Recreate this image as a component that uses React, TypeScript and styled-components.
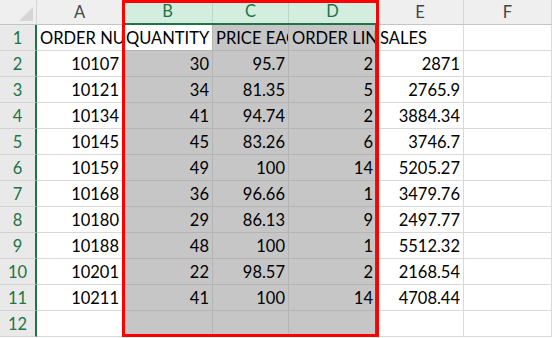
import React from 'react';
import styled, { createGlobalStyle } from 'styled-components';

const GlobalStyle = createGlobalStyle`
  html, body { margin: 0; padding: 0; background: #fff; overflow: hidden; }
  body { font-family: Lato, 'Liberation Sans', Arial, sans-serif; }
`;

const COLUMNS = ['A', 'B', 'C', 'D', 'E', 'F'];
const SELECTED = ['B', 'C', 'D'];

const headings = ['ORDER NUMBER', 'QUANTITY', 'PRICE EACH', 'ORDER LINE NUMBER', 'SALES'];

const data: string[][] = [
  ['10107', '30', '95.7', '2', '2871'],
  ['10121', '34', '81.35', '5', '2765.9'],
  ['10134', '41', '94.74', '2', '3884.34'],
  ['10145', '45', '83.26', '6', '3746.7'],
  ['10159', '49', '100', '14', '5205.27'],
  ['10168', '36', '96.66', '1', '3479.76'],
  ['10180', '29', '86.13', '9', '2497.77'],
  ['10188', '48', '100', '1', '5512.32'],
  ['10201', '22', '98.57', '2', '2168.54'],
  ['10211', '41', '100', '14', '4708.44'],
  ['', '', '', '', ''],
];

const Sheet = styled.div`
  position: relative;
  display: grid;
  grid-template-columns: 37px 86px 90px 76px 88px 87px 88px;
  grid-template-rows: 25px repeat(12, 26px);
  width: 552px;
  font-size: 16.5px;
`;

const Corner = styled.div`
  position: relative;
  background: #efefef;
  border-right: 1px solid #d6d6d6;
  border-bottom: 1px solid #c4c4c4;

  &::after {
    content: '';
    position: absolute;
    right: 3px;
    bottom: 3px;
    border-style: solid;
    border-width: 0 0 14px 14px;
    border-color: transparent transparent #d6d6d6 transparent;
  }
`;

const ColHeader = styled.div<{ $selected?: boolean }>`
  display: flex;
  align-items: flex-end;
  justify-content: center;
  padding-bottom: 2px;
  box-sizing: border-box;
  background: ${(p) => (p.$selected ? '#d3eedf' : '#efefef')};
  color: ${(p) => (p.$selected ? '#217346' : '#444')};
  border-right: 1px solid ${(p) => (p.$selected ? '#bcd6c6' : '#d6d6d6')};
  border-bottom: ${(p) => (p.$selected ? '2px solid #217346' : '1px solid #c4c4c4')};
  line-height: 20px;
`;

const RowHeader = styled.div`
  display: flex;
  align-items: flex-end;
  justify-content: center;
  padding-bottom: 2px;
  box-sizing: border-box;
  background: #e9e9e9;
  color: #217346;
  border-right: 2px solid #217346;
  border-bottom: 1px solid #d2d2d2;
  line-height: 20px;
`;

const Cell = styled.div<{ $selected?: boolean; $active?: boolean; $numeric?: boolean }>`
  display: flex;
  align-items: flex-end;
  justify-content: ${(p) => (p.$numeric ? 'flex-end' : 'flex-start')};
  box-sizing: border-box;
  padding: 0 3px 2px 3px;
  overflow: hidden;
  white-space: nowrap;
  color: #000;
  line-height: 20px;
  background: ${(p) => (p.$active ? '#fff' : p.$selected ? '#c6c6c6' : '#fff')};
  border-right: 1px solid ${(p) => (p.$selected ? '#b4b4b4' : '#d9d9d9')};
  border-bottom: 1px solid ${(p) => (p.$selected ? '#b4b4b4' : '#d9d9d9')};
`;

const SelectionEdge = styled.div`
  position: absolute;
  left: 123px;
  top: 23px;
  width: 254px;
  height: 314px;
  box-sizing: border-box;
  border: 2px solid #217346;
  pointer-events: none;
`;

const RedFrame = styled.div`
  position: absolute;
  left: 122px;
  top: 0;
  width: 257px;
  height: 337px;
  box-sizing: border-box;
  border: 3px solid #ff0000;
  pointer-events: none;
`;

export default function App() {
  const rows = [headings, ...data];
  return (
    <>
      <GlobalStyle />
      <Sheet>
        <Corner />
        {COLUMNS.map((c) => (
          <ColHeader key={c} $selected={SELECTED.includes(c)}>
            {c}
          </ColHeader>
        ))}
        {rows.map((r, i) => (
          <React.Fragment key={i}>
            <RowHeader>{i + 1}</RowHeader>
            {r.map((v, j) => (
              <Cell
                key={j}
                $selected={j >= 1 && j <= 3}
                $active={i === 0 && j === 1}
                $numeric={i > 0}
              >
                {v}
              </Cell>
            ))}
            <Cell />
          </React.Fragment>
        ))}
        <SelectionEdge />
        <RedFrame />
      </Sheet>
    </>
  );
}
